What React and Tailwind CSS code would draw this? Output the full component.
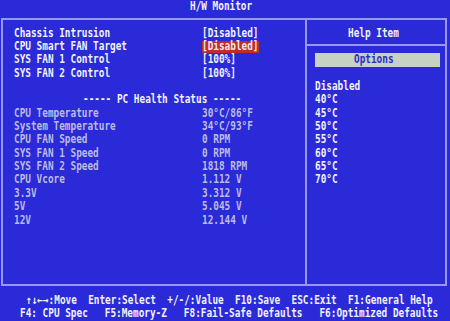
import React from "react";

const T = ({ children, className = "" }) => (
  <span className={"inline-block whitespace-pre origin-left scale-x-[0.816] " + className}>
    {children}
  </span>
);

const top = [
  ["Chassis Intrusion", "[Disabled]", false],
  ["CPU Smart FAN Target", "[Disabled]", true],
  ["SYS FAN 1 Control", "[100%]", false],
  ["SYS FAN 2 Control", "[100%]", false],
];

const health = [
  ["CPU Temperature", "30°C/86°F"],
  ["System Temperature", "34°C/93°F"],
  ["CPU FAN Speed", "0 RPM"],
  ["SYS FAN 1 Speed", "0 RPM"],
  ["SYS FAN 2 Speed", "1818 RPM"],
  ["CPU Vcore", "1.112 V"],
  ["3.3V", "3.312 V"],
  ["5V", "5.045 V"],
  ["12V", "12.144 V"],
];

const help = ["Disabled", "40°C", "45°C", "50°C", "55°C", "60°C", "65°C", "70°C"];

export default function App() {
  return (
    <div className="w-[450px] h-[321px] overflow-hidden bg-[#2a2ad8] font-['DejaVu_Sans_Mono',monospace] font-bold text-[11.5px] leading-[13.35px] text-[#f2f2f8]">
      <div className="h-[18px] pl-[189.5px]">
        <T>H/W Monitor</T>
      </div>
      <div className="ml-[1px] w-[446px] h-[268px] border-2 border-[#9898f0] flex">
        <div className="w-[304px] border-r-2 border-[#9898f0] pt-[6.7px]">
          {top.map(([l, v, hi]) => (
            <div key={l} className="h-[13.35px] flex items-start">
              <div className="w-[199px] pl-[11px]">
                <T>{l}</T>
              </div>
              {hi ? (
                <div className="w-[57px] h-[12px] mt-[0.5px] bg-[#bc2e2c] text-[#f8e6e6]">
                  <div className="-mt-[0.5px]">
                    <T>{v}</T>
                  </div>
                </div>
              ) : (
                <div>
                  <T>{v}</T>
                </div>
              )}
            </div>
          ))}
          <div className="h-[13.35px]" />
          <div className="h-[13.35px] pl-[79.5px]">
            <T>----- PC Health Status -----</T>
          </div>
          {health.map(([l, v]) => (
            <div key={l} className="h-[13.35px] flex items-start text-[#bcbce2]">
              <div className="w-[199px] pl-[11px]">
                <T>{l}</T>
              </div>
              <div>
                <T>{v}</T>
              </div>
            </div>
          ))}
        </div>
        <div className="flex-1">
          <div className="h-[26px] border-b-2 border-[#9898f0] pt-[6.7px] pl-[41px]">
            <T>Help Item</T>
          </div>
          <div className="mt-[7.4px] ml-[8px] w-[125px] h-[13.35px] bg-[#c8d2c2] text-[#2c2cc8] pl-[39px]">
            <T>Options</T>
          </div>
          <div className="h-[13.35px]" />
          <div className="pl-[8px]">
            {help.map((h) => (
              <div key={h} className="h-[13.35px]">
                <T>{h}</T>
              </div>
            ))}
          </div>
        </div>
      </div>
      <div className="pt-[7.7px]">
        <div className="h-[13.35px] pl-[26px]">
          <T>{"↑↓←→:Move  Enter:Select  +/-/:Value  F10:Save  ESC:Exit  F1:General Help"}</T>
        </div>
        <div className="h-[13.35px] pl-[19.5px]">
          <T>{"F4: CPU Spec   F5:Memory-Z   F8:Fail-Safe Defaults   F6:Optimized Defaults"}</T>
        </div>
      </div>
    </div>
  );
}
